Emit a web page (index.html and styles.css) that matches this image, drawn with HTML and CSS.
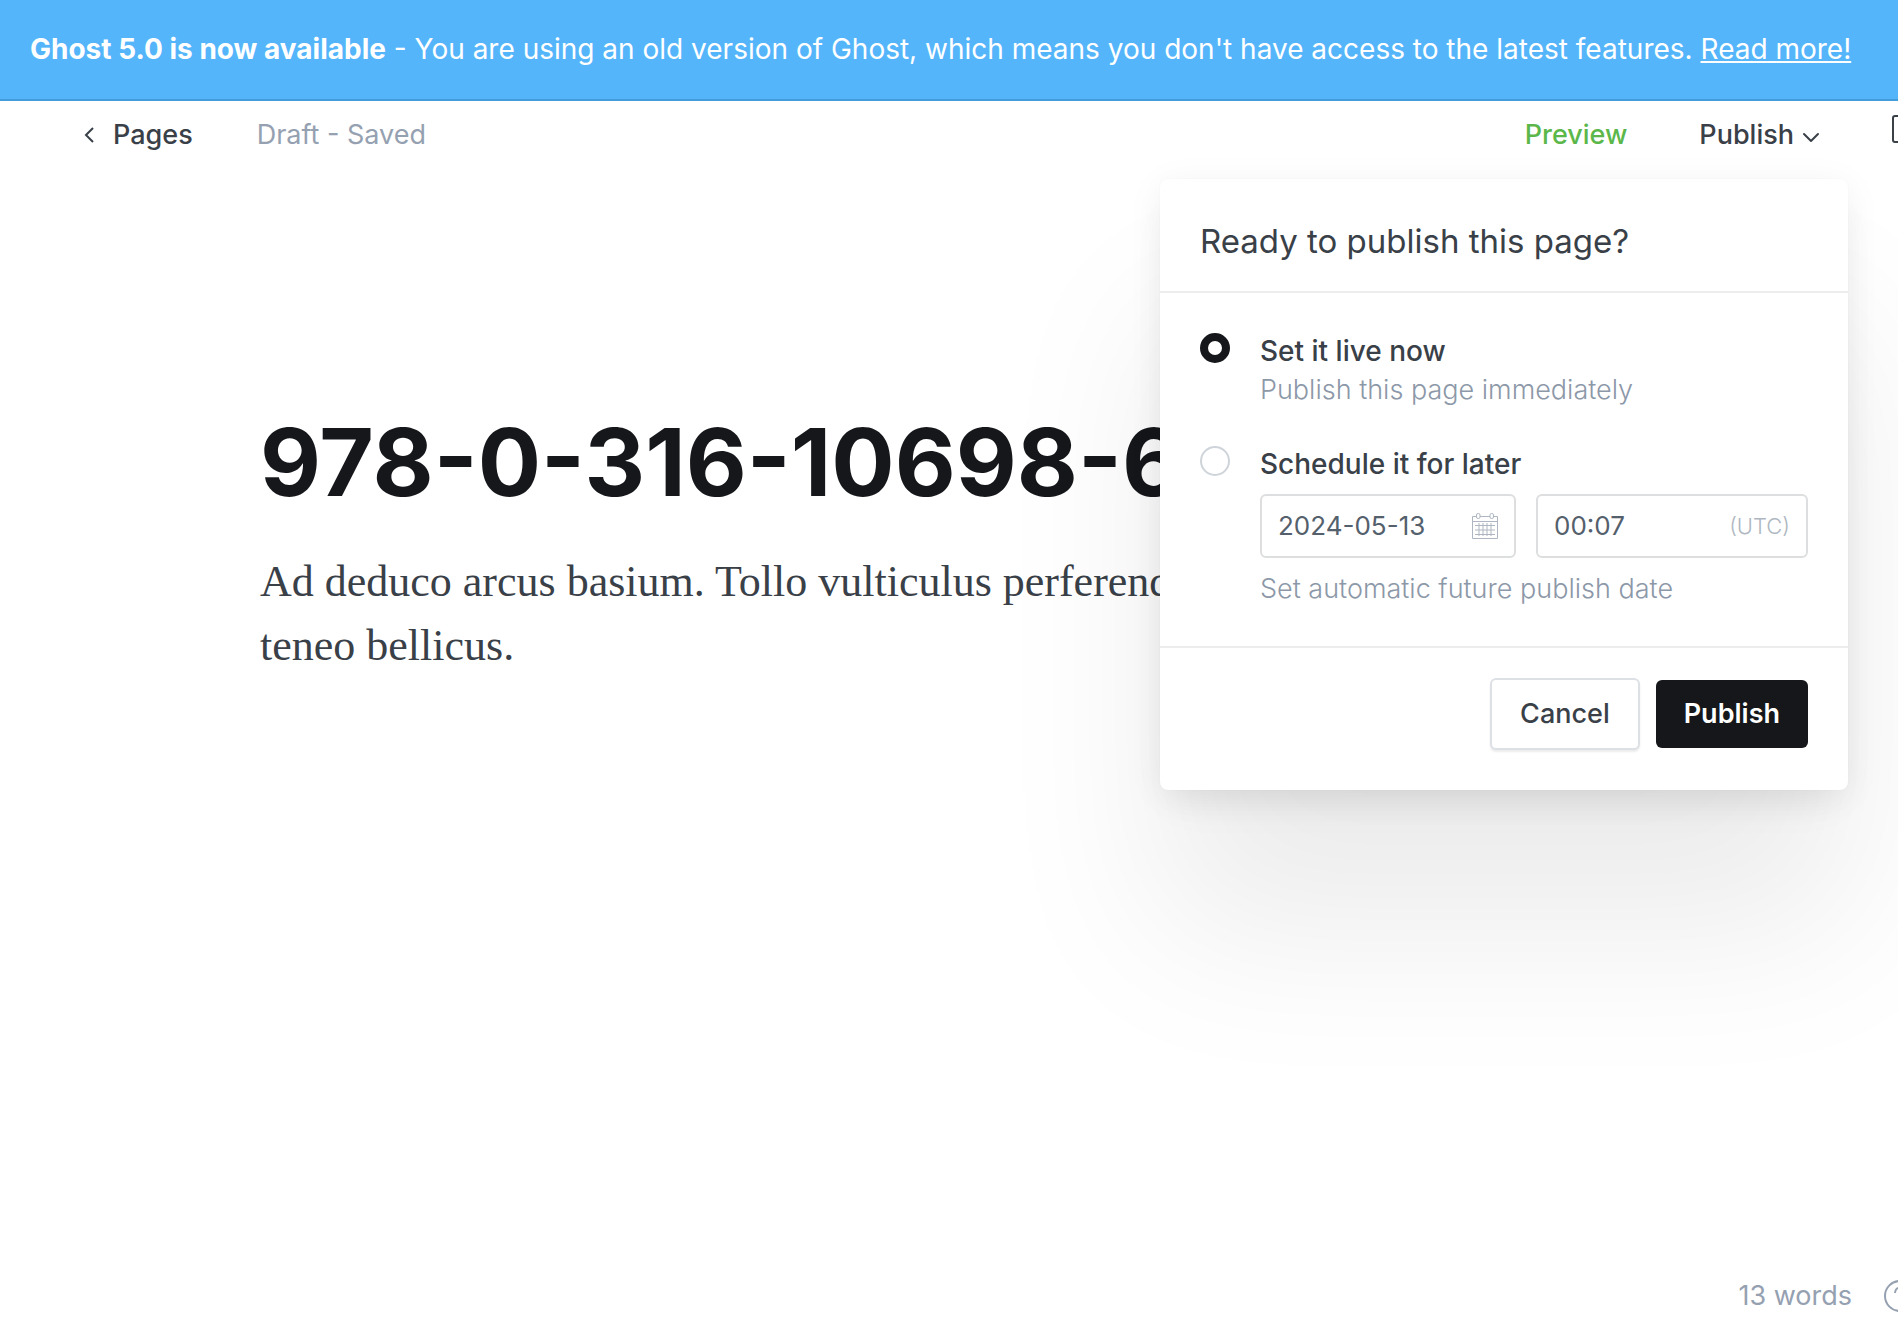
FILE: index.html
```html
<!DOCTYPE html>
<html lang="en">
<head>
<meta charset="utf-8">
<meta name="viewport" content="width=device-width, initial-scale=1">
<title>Ghost editor</title>
<link rel="stylesheet" href="styles.css">
</head>
<body>
<aside class="alert">
  <p class="alert-text"><b>Ghost 5.0 is now available</b> - You are using an old version of Ghost, which means you don't have access to the latest features. <a href="#upgrade">Read more!</a></p>
</aside>
<header class="editor-header">
  <a class="back" href="#pages">
    <svg class="back-icon" viewBox="0 0 10 16" aria-hidden="true"><path d="M9 1 2 8l7 7"/></svg>
    Pages
  </a>
  <span class="status">Draft - Saved</span>
  <a class="preview" href="#preview">Preview</a>
  <div class="publish-menu">
    <button class="publish-trigger" type="button">Publish
      <svg class="chevron" viewBox="0 0 18 12" aria-hidden="true"><path d="m2 2 7 7 7-7"/></svg>
    </button>
    <form class="popover">
      <h2 class="popover-title">Ready to publish this page?</h2>
      <div class="popover-body">
        <div class="option">
          <input class="radio" type="radio" name="when" id="when-now" checked>
          <div class="option-main">
            <label class="option-label" for="when-now">Set it live now</label>
            <p class="option-help">Publish this page immediately</p>
          </div>
        </div>
        <div class="option">
          <input class="radio" type="radio" name="when" id="when-later">
          <div class="option-main">
            <label class="option-label" for="when-later">Schedule it for later</label>
            <div class="datetime">
              <div class="field">
                <input class="field-input" type="text" value="2024-05-13" aria-label="Publish date">
                <svg class="calendar" viewBox="0 0 26 26" aria-hidden="true"><path d="M4 3.500H.5v22h25v-22H22M8 3.500h10M.5 8.500h25M3 12.500h20M3 17h20M3 21.500h20M7 10v13M11 10v13M15 10v13M19 10v13"/><rect x="4.500" y=".5" width="3.500" height="5" rx="1.500"/><rect x="18" y=".5" width="3.500" height="5" rx="1.500"/></svg>
              </div>
              <div class="field">
                <input class="field-input" type="text" value="00:07" aria-label="Publish time">
                <span class="zone">(UTC)</span>
              </div>
            </div>
            <p class="option-help">Set automatic future publish date</p>
          </div>
        </div>
      </div>
      <div class="popover-footer">
        <button class="btn btn-plain" type="button">Cancel</button>
        <button class="btn btn-dark" type="submit">Publish</button>
      </div>
    </form>
  </div>
  <button class="settings" type="button" aria-label="Settings">
    <svg class="settings-icon" viewBox="0 0 32 28" aria-hidden="true"><rect x="1" y="1" width="30" height="26" rx="2"/><path d="M20 1v26"/></svg>
  </button>
</header>
<main class="editor">
  <h1 class="post-title">978-0-316-10698-6</h1>
  <p class="post-body">Ad deduco arcus basium. Tollo vulticulus perferendis<br>teneo bellicus.</p>
</main>
<footer class="editor-footer">
  <span>13 words</span>
  <a class="help" href="#help" aria-label="Help">
    <svg class="help-icon" viewBox="0 0 32 32" aria-hidden="true"><circle cx="16" cy="16" r="15"/><path d="M11 13c0-7 10-7 10-1 0 4-5 4-5 8M16 23v2"/></svg>
  </a>
</footer>
</body>
</html>
```
FILE: styles.css
```css
* { box-sizing: border-box; }
body {
  margin: 0;
  min-height: 100vh;
  display: flex;
  flex-direction: column;
  overflow: hidden;
  background: #fff;
  color: #394047;
  font: 400 28px/40px Inter, "Liberation Sans", sans-serif;
}
h1, h2, p { margin: 0; }
a { color: inherit; text-decoration: none; }
button, input { font: inherit; color: inherit; }
svg { fill: none; stroke: currentColor; flex: none; }

.alert {
  padding: 29px 30px 30px;
  background: #54b5fb;
  border-bottom: 2px solid #439cdc;
  color: #fff;
}
.alert-text { white-space: nowrap; }
.alert-text a { text-decoration: underline; }

.editor-header {
  display: flex;
  align-items: center;
  height: 68px;
  margin-right: -26px;
  padding-left: 84px;
  font-size: 27px;
  font-weight: 500;
}
.back { display: flex; align-items: center; gap: 19px; }
.back-icon { width: 10px; height: 16px; stroke-width: 2; }
.status { margin-left: 64px; color: #95a1b1; font-weight: 400; }
.preview { margin-left: auto; color: #5bb74a; }
.publish-menu { position: relative; margin-left: 72px; }
.publish-trigger {
  display: flex;
  align-items: center;
  gap: 8px;
  padding: 0;
  border: 0;
  background: none;
  font-weight: 500;
}
.chevron { width: 18px; height: 12px; margin-top: 6px; stroke-width: 2; stroke-linecap: round; stroke-linejoin: round; }
.settings { margin: 0 0 12px 72px; padding: 0; border: 0; background: none; }
.settings-icon { display: block; width: 32px; height: 28px; stroke-width: 2; }

.popover {
  position: absolute;
  z-index: 2;
  top: 64px;
  right: -28px;
  width: 688px;
  border-radius: 8px;
  background: #fff;
  box-shadow: 0 0 2px rgba(0,0,0,.04), 0 6px 36px rgba(0,0,0,.06), 0 24px 40px -12px rgba(0,0,0,.06), 0 140px 170px rgba(0,0,0,.08);
  font-weight: 400;
}
.popover-title {
  padding: 40px 40px 28px;
  border-bottom: 2px solid #ededee;
  font-size: 33px;
  line-height: 44px;
  font-weight: 400;
}
.popover-body {
  display: flex;
  flex-direction: column;
  gap: 35px;
  padding: 38px 40px;
}
.option { display: flex; gap: 30px; }
.option-main { flex: 1; min-width: 0; }
.radio {
  appearance: none;
  flex: none;
  width: 30px;
  height: 30px;
  margin: 2px 0 0;
  border: 2px solid #ced4d9;
  border-radius: 50%;
  background: #fff;
}
.radio:checked { border: 8px solid #15171a; }
.option-label { display: block; font-size: 28px; font-weight: 500; }
.option-help { color: #8c98a8; font-size: 27px; line-height: 38px; font-weight: 300; }
.datetime {
  display: grid;
  grid-template-columns: 16fr 17fr;
  gap: 20px;
  margin: 10px 0 12px;
}
.field {
  display: flex;
  align-items: center;
  height: 64px;
  padding: 0 16px;
  border: 2px solid #dddedf;
  border-radius: 6px;
  color: #aeb7c1;
}
.field-input {
  flex: 1;
  width: 0;
  padding: 0;
  border: 0;
  outline: 0;
  background: none;
  color: #54606c;
  font-size: 26px;
}
.calendar { width: 26px; height: 26px; }
.zone { font-size: 22px; font-weight: 300; }
.popover-footer {
  display: flex;
  justify-content: flex-end;
  align-items: center;
  gap: 16px;
  padding: 30px 40px 40px;
  border-top: 2px solid #ededee;
}
.btn {
  height: 68px;
  padding: 0 28px;
  border: 0;
  border-radius: 6px;
  font-weight: 500;
}
.btn-plain {
  height: 72px;
  border: 2px solid #dde1e5;
  background: #fff;
  box-shadow: 0 2px 2px rgba(0,0,0,.08);
}
.btn-dark { background: #15171a; color: #fff; font-weight: 600; }

.editor { flex: 1; padding: 233px 260px 0; }
.post-title {
  color: #15171a;
  font-size: 94px;
  line-height: 120px;
  font-weight: 700;
}
.post-body {
  margin-top: 28px;
  font: 400 44px/64px "Liberation Serif", serif;
}
.editor-footer {
  display: flex;
  justify-content: flex-end;
  align-items: center;
  gap: 32px;
  margin-right: -18px;
  padding-bottom: 4px;
  color: #95a1b1;
  font-size: 27px;
}
.help-icon { display: block; width: 32px; height: 32px; stroke-width: 2; }
```
